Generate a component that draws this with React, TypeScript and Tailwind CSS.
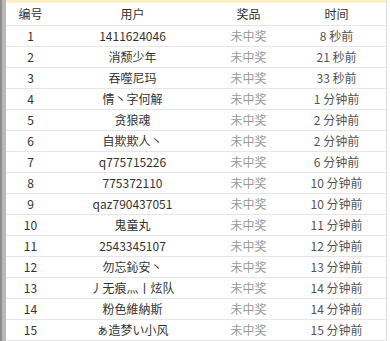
const rows: [number, string, string][] = [
  [1, "1411624046", "8 秒前"],
  [2, "消颓少年", "21 秒前"],
  [3, "吞噬尼玛", "33 秒前"],
  [4, "情丶字何解", "1 分钟前"],
  [5, "贪狼魂", "2 分钟前"],
  [6, "自欺欺人丶", "2 分钟前"],
  [7, "q775715226", "6 分钟前"],
  [8, "775372110", "10 分钟前"],
  [9, "qaz790437051", "10 分钟前"],
  [10, "鬼童丸", "11 分钟前"],
  [11, "2543345107", "12 分钟前"],
  [12, "勿忘鈊安丶", "13 分钟前"],
  [13, "丿无痕灬丨炫队", "14 分钟前"],
  [14, "粉色維納斯", "14 分钟前"],
  [15, "ぁ造梦い小风", "15 分钟前"],
];

export default function App() {
  return (
    <div
      className="flex h-[341px] w-[390px] bg-white text-[12px] overflow-hidden"
      style={{ fontFamily: '"Noto Sans CJK SC", "Microsoft YaHei", sans-serif' }}
    >
      <div className="w-[2px] shrink-0 bg-[#8c8c8c]" />
      <div className="w-[4px] shrink-0 bg-[#b8b8b8]" />
      <div className="w-[381px] shrink-0 self-start border-t-[3px] border-t-[#fcefc4] border-r border-r-[#dcdcdc]">
        <table className="w-[380px] border-collapse table-fixed">
          <colgroup>
            <col className="w-[49px]" />
            <col className="w-[155px]" />
            <col className="w-[77px]" />
            <col className="w-[99px]" />
          </colgroup>
          <thead>
            <tr className="h-[22px] border-b border-[#e6e6e6] text-[#333]">
              <th className="font-normal text-center">编号</th>
              <th className="font-normal text-center">用户</th>
              <th className="font-normal text-center">奖品</th>
              <th className="font-normal text-center">时间</th>
            </tr>
          </thead>
          <tbody>
            {rows.map(([id, user, time]) => (
              <tr key={id} className="h-[21px] border-b border-[#e6e6e6]">
                <td className="text-center text-[#333] leading-none">{id}</td>
                <td className="text-center text-[#333] leading-none">{user}</td>
                <td className="text-center text-[#9a9a9a] leading-none">未中奖</td>
                <td className="text-center text-[#555] leading-none">{time}</td>
              </tr>
            ))}
          </tbody>
        </table>
      </div>
    </div>
  );
}
